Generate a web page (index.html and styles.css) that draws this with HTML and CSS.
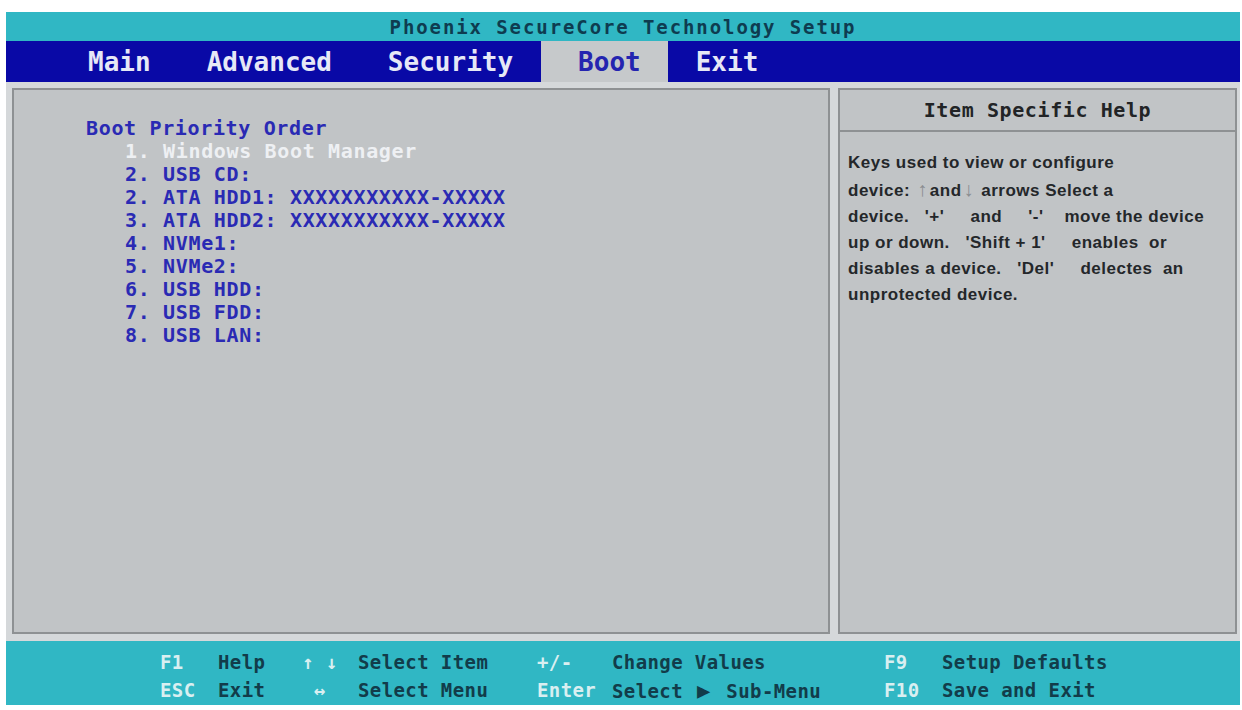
FILE: index.html
```html
<!DOCTYPE html>
<html lang="en">
<head>
    <meta charset="UTF-8">
    <meta name="viewport" content="width=device-width, initial-scale=1.0">
    <title>Phoenix SecureCore Technology Setup</title>
    <link rel="stylesheet" href="styles.css">
</head>
<body>
    <div class="screen">
        <div class="title-bar">Phoenix SecureCore Technology Setup</div>

        <div class="menu-bar">
            <span class="menu-item">Main</span>
            <span class="menu-item">Advanced</span>
            <span class="menu-item">Security</span>
            <span class="menu-item active">Boot</span>
            <span class="menu-item">Exit</span>
        </div>

        <div class="content">
            <div class="panel left-panel">
                <div class="list-title">Boot Priority Order</div>
                <ul class="boot-list">
                    <li class="selected">1. Windows Boot Manager</li>
                    <li>2. USB CD:</li>
                    <li>2. ATA HDD1: XXXXXXXXXXX-XXXXX</li>
                    <li>3. ATA HDD2: XXXXXXXXXXX-XXXXX</li>
                    <li>4. NVMe1:</li>
                    <li>5. NVMe2:</li>
                    <li>6. USB HDD:</li>
                    <li>7. USB FDD:</li>
                    <li>8. USB LAN:</li>
                </ul>
            </div>
            <div class="panel right-panel">
                <div class="help-title">Item Specific Help</div>
                <p class="help-text">
                    Keys used to view or configure<br>
                    device: <span class="arrow">↑</span>and<span class="arrow">↓</span> arrows Select a<br>
                    device.&nbsp;&nbsp; '+' &nbsp;&nbsp;&nbsp;&nbsp;and&nbsp;&nbsp;&nbsp;&nbsp; '-' &nbsp;&nbsp;&nbsp;move the device<br>
                    up or down.&nbsp;&nbsp; 'Shift + 1' &nbsp;&nbsp;&nbsp;&nbsp;enables&nbsp; or<br>
                    disables a device.&nbsp;&nbsp; 'Del' &nbsp;&nbsp;&nbsp;&nbsp;delectes&nbsp; an<br>
                    unprotected device.
                </p>
            </div>
        </div>

        <div class="key-bar">
            <span class="key">F1</span>
            <span class="desc">Help</span>
            <span class="key">↑ ↓</span>
            <span class="desc">Select Item</span>
            <span class="key">+/-</span>
            <span class="desc">Change Values</span>
            <span class="key">F9</span>
            <span class="desc">Setup Defaults</span>

            <span class="key">ESC</span>
            <span class="desc">Exit</span>
            <span class="key">&nbsp;↔</span>
            <span class="desc">Select Menu</span>
            <span class="key">Enter</span>
            <span class="desc">Select <span class="tri">▶</span> Sub-Menu</span>
            <span class="key">F10</span>
            <span class="desc">Save and Exit</span>
        </div>
    </div>
</body>
</html>
```

FILE: styles.css
```css
body {
    margin: 0;
    background-color: #ffffff;
    padding: 12px 2px 5px 6px;
    font-family: "DejaVu Sans Mono", "Liberation Mono", monospace;
    font-weight: bold;
}
.screen {
    width: 1234px;
}

/* Thanh tiêu đề */
.title-bar {
    height: 29px;
    line-height: 30px;
    background-color: #30b7c4;
    color: #0e3c50;
    text-align: center;
    font-size: 19px;
    letter-spacing: 1.9px;
}

/* Thanh menu */
.menu-bar {
    display: flex;
    height: 41px;
    background-color: #0909a6;
    padding-left: 54px;
}
.menu-item {
    padding: 0 28px;
    line-height: 42px;
    font-size: 26px;
    color: #e6e8f6;
}
.menu-item.active {
    background-color: #c6c9cb;
    color: #2424b0;
    padding: 0 27px 0 37px;
}

/* Vùng nội dung */
.content {
    display: flex;
    gap: 8px;
    height: 546px;
    padding: 6px 3px 7px 6px;
    background-color: #d5d8da;
}
.panel {
    background-color: #c1c4c6;
    border: 2px solid #8e9193;
    box-sizing: border-box;
}
.left-panel {
    width: 818px;
    padding: 27px 0 0 72px;
}
.right-panel {
    width: 399px;
}
.list-title {
    color: #2a2ab4;
    font-size: 20px;
    letter-spacing: 0.65px;
    line-height: 23px;
}
.boot-list {
    list-style: none;
    margin: 0;
    padding-left: 39px;
    color: #2a2ab4;
    font-size: 20px;
    letter-spacing: 0.65px;
    line-height: 23px;
}
.boot-list .selected {
    color: #eef0f3;
}
.help-title {
    height: 40px;
    line-height: 40px;
    text-align: center;
    border-bottom: 2px solid #8e9193;
    color: #222426;
    font-size: 20px;
    letter-spacing: 0.6px;
}
.help-text {
    margin: 0;
    padding: 18px 0 0 8px;
    font-family: "Liberation Sans", Arial, sans-serif;
    font-weight: bold;
    font-size: 17px;
    letter-spacing: 0.5px;
    line-height: 26px;
    color: #24272a;
}
.arrow {
    color: #8a8d90;
    font-weight: normal;
    font-size: 20px;
    padding: 0 2px;
}

/* Thanh phím tắt */
.key-bar {
    display: grid;
    grid-template-columns: 58px 84px 56px 179px 75px 272px 58px auto;
    grid-auto-rows: 28px;
    align-items: center;
    height: 64px;
    box-sizing: border-box;
    padding: 7px 0 0 154px;
    background-color: #30b7c4;
    font-size: 19px;
    letter-spacing: 0.4px;
}
.key {
    color: #d9eff1;
}
.desc {
    color: #123c4a;
}
.tri {
    font-size: 22px;
    padding: 0 4px 0 2px;
}
```
